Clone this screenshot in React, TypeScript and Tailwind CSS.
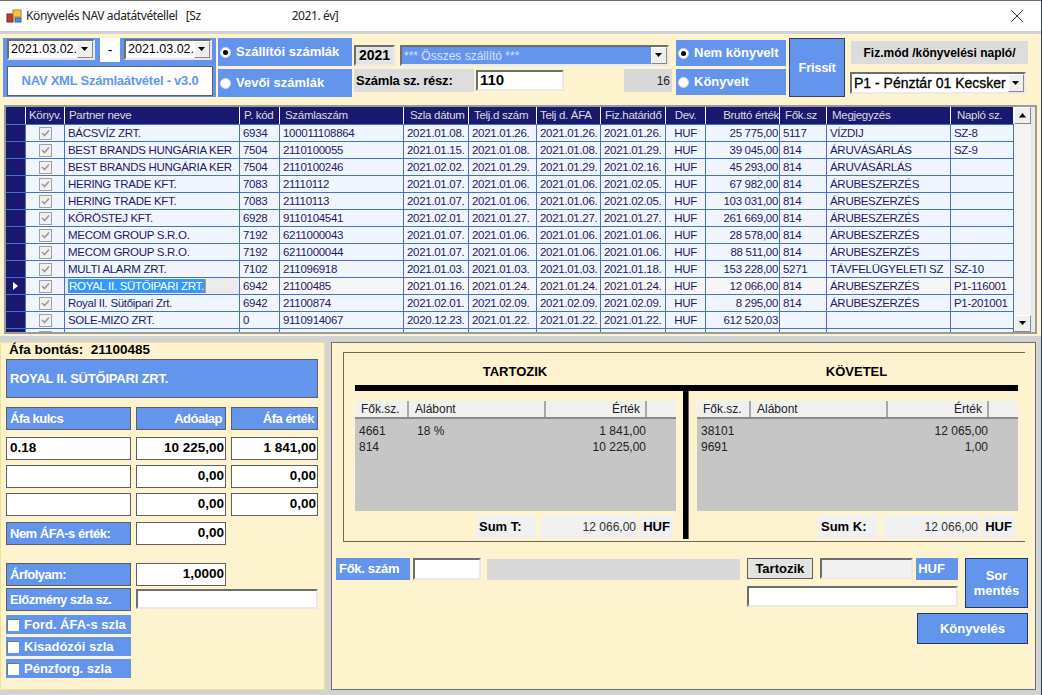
import { X } from 'lucide-react';
import { FC, ReactNode } from 'react';

const cols =
  'grid grid-cols-[19px_38px_174px_39px_123px_64px_67px_63px_64px_39px_73px_46px_123px_62px] gap-x-px';
const bevel =
  'border-2 border-t-[#6e6e6e] border-l-[#6e6e6e] border-r-[#e9e9e9] border-b-[#e9e9e9]';
const boxed = 'border border-[#5f5f5f]';
const blueLabel = 'bg-[#6495ed] text-white font-bold text-[13px] tracking-[-0.3px]';

const rows = [
  ['BÁCSVÍZ ZRT.', '6934', '100011108864', '2021.01.08.', '2021.01.26.', '2021.01.26.', '2021.01.26.', 'HUF', '25 775,00', '5117', 'VÍZDIJ', 'SZ-8'],
  ['BEST BRANDS HUNGÁRIA KER', '7504', '2110100055', '2021.01.15.', '2021.01.08.', '2021.01.08.', '2021.01.29.', 'HUF', '39 045,00', '814', 'ÁRUVÁSÁRLÁS', 'SZ-9'],
  ['BEST BRANDS HUNGÁRIA KER', '7504', '2110100246', '2021.02.02.', '2021.01.29.', '2021.01.29.', '2021.02.16.', 'HUF', '45 293,00', '814', 'ÁRUVÁSÁRLÁS', ''],
  ['HERING TRADE KFT.', '7083', '21110112', '2021.01.07.', '2021.01.06.', '2021.01.06.', '2021.02.05.', 'HUF', '67 982,00', '814', 'ÁRUBESZERZÉS', ''],
  ['HERING TRADE KFT.', '7083', '21110113', '2021.01.07.', '2021.01.06.', '2021.01.06.', '2021.02.05.', 'HUF', '103 031,00', '814', 'ÁRUBESZERZÉS', ''],
  ['KŐRÖSTEJ KFT.', '6928', '9110104541', '2021.02.01.', '2021.01.27.', '2021.01.27.', '2021.01.27.', 'HUF', '261 669,00', '814', 'ÁRUBESZERZÉS', ''],
  ['MECOM GROUP S.R.O.', '7192', '6211000043', '2021.01.07.', '2021.01.06.', '2021.01.06.', '2021.01.06.', 'HUF', '28 578,00', '814', 'ÁRUBESZERZÉS', ''],
  ['MECOM GROUP S.R.O.', '7192', '6211000044', '2021.01.07.', '2021.01.06.', '2021.01.06.', '2021.01.06.', 'HUF', '88 511,00', '814', 'ÁRUBESZERZÉS', ''],
  ['MULTI ALARM ZRT.', '7102', '211096918', '2021.01.03.', '2021.01.03.', '2021.01.03.', '2021.01.18.', 'HUF', '153 228,00', '5271', 'TÁVFELÜGYELETI SZ', 'SZ-10'],
  ['ROYAL II. SÜTŐIPARI ZRT.', '6942', '21100485', '2021.01.16.', '2021.01.24.', '2021.01.24.', '2021.01.24.', 'HUF', '12 066,00', '814', 'ÁRUBESZERZÉS', 'P1-116001'],
  ['Royal II. Sütőipari Zrt.', '6942', '21100874', '2021.02.01.', '2021.02.09.', '2021.02.09.', '2021.02.09.', 'HUF', '8 295,00', '814', 'ÁRUBESZERZÉS', 'P1-201001'],
  ['SOLE-MIZO ZRT.', '0', '9110914067', '2020.12.23.', '2021.01.22.', '2021.01.22.', '2021.01.22.', 'HUF', '612 520,03', '', '', ''],
  ['', '', '', '', '', '', '', '', '', '', '', ''],
];

const headers = [
  { text: 'Könyv.', cls: 'pl-[3px]' },
  { text: 'Partner neve', cls: 'pl-[4px]' },
  { text: 'P. kód', cls: 'pl-[4px]' },
  { text: 'Számlaszám', cls: 'pl-[5px]' },
  { text: 'Szla dátum', cls: 'pl-[6px]' },
  { text: 'Telj.d szám', cls: 'pl-[5px]' },
  { text: 'Telj d. ÁFA', cls: 'pl-[3px]' },
  { text: 'Fiz.határidő', cls: 'pl-[4px]' },
  { text: 'Dev.', cls: 'text-center' },
  { text: 'Bruttó érték', cls: 'text-right' },
  { text: 'Fők.sz', cls: 'pl-[5px]' },
  { text: 'Megjegyzés', cls: 'pl-[5px]' },
  { text: 'Napló sz.', cls: 'pl-[6px]' },
];

const DropButton: FC = () => (
  <div className="w-[16px] h-full bg-[#efefef] border border-t-white border-l-white border-r-[#8a8a8a] border-b-[#8a8a8a] flex items-center justify-center shrink-0">
    <svg width="8" height="5" viewBox="0 0 8 5">
      <path d="M0 0h7L3.5 4z" fill="#000" />
    </svg>
  </div>
);

const Radio: FC<{ checked?: boolean }> = ({ checked }) => (
  <span className="w-[11px] h-[11px] rounded-full bg-white border border-[#d8d8d8] flex items-center justify-center shrink-0">
    {checked && <span className="w-[5px] h-[5px] rounded-full bg-black" />}
  </span>
);

const GridCheck: FC = () => (
  <svg width="13" height="13" viewBox="0 0 13 13">
    <rect x="0.5" y="0.5" width="12" height="12" fill="#f1f1f1" stroke="#a0a0a0" />
    <path d="M3 6l2.5 2.5L10 3.5" fill="none" stroke="#9a9a9a" strokeWidth="1.6" />
  </svg>
);

const RadioBox: FC<{ label: string; checked?: boolean; className: string }> = ({ label, checked, className }) => (
  <div className={`${blueLabel} flex items-center gap-[5px] pl-[2px] tracking-normal ${className}`}>
    <Radio checked={checked} />
    <span>{label}</span>
  </div>
);

const DateBox: FC<{ className?: string }> = ({ className }) => (
  <div className={`${bevel} w-[88px] h-[21px] bg-white flex items-center text-[12.5px] leading-none pl-[2px] justify-between ${className}`}>
    <span>2021.03.02.</span>
    <DropButton />
  </div>
);

const TopBar: FC = () => (
  <div className="h-[71px] bg-[#fdf3cf] flex items-start pl-[3px] pt-[4px] shrink-0">
    <div className="w-[213px] h-[59px] bg-[#6495ed] pl-[4px] pt-px flex flex-col gap-[3px]">
      <div className="flex items-start h-[24px]">
        <DateBox />
        <div className="ml-[5px] w-[20px] h-[24px] -mt-px bg-white flex items-center justify-center text-[14px]">-</div>
        <DateBox className="ml-[4px]" />
      </div>
      <div className={`${boxed} w-[206px] h-[30px] bg-white flex items-center justify-center text-[#6495ed] font-bold text-[13px] tracking-[-0.25px]`}>
        NAV XML Számlaátvétel - v3.0
      </div>
    </div>
    <div className="w-[134px] ml-[2px] flex flex-col gap-[3px]">
      <RadioBox label="Szállítói számlák" checked className="h-[28px]" />
      <RadioBox label="Vevői számlák" className="h-[28px]" />
    </div>
    <div className="ml-[2px] w-[318px] flex flex-col">
      <div className="flex gap-[5px] mt-[7px] h-[21px]">
        <div className={`${bevel} w-[41px] bg-[#e3e3e3] flex items-center justify-center font-bold text-[14px]`}>2021</div>
        <div className={`${bevel} w-[269px] bg-[#6495ed] flex items-center justify-between text-[#d6e3fa] text-[12px] pl-[2px]`}>
          <span>*** Összes szállító ***</span>
          <DropButton />
        </div>
      </div>
      <div className="flex mt-[3px] h-[23px] items-start">
        <div className="w-[120px] h-[23px] bg-[#dcdcdc] flex items-center pl-[2px] font-bold text-[13px] tracking-[-0.2px]">Számla sz. rész:</div>
        <div className={`${bevel} w-[88px] h-[21px] mt-px ml-[2px] bg-white flex items-center pl-[2px] font-bold text-[15px]`}>110</div>
        <div className="w-[48px] h-[23px] ml-[60px] bg-[#d9d9d9] flex items-center justify-end pr-[2px] text-[12px] text-[#222]">16</div>
      </div>
    </div>
    <div className="ml-[4px] mt-[2px] w-[110px] flex flex-col gap-[3px]">
      <RadioBox label="Nem könyvelt" checked className="h-[26px]" />
      <RadioBox label="Könyvelt" className="h-[26px]" />
    </div>
    <div className={`${blueLabel} ml-[3px] w-[56px] h-[59px] border border-[#33415e] flex items-center justify-center`}>Frissít</div>
    <div className="ml-[5px] w-[178px] flex flex-col">
      <div className="ml-px mt-[3px] w-[177px] h-[23px] bg-[#dcdcdc] flex items-center justify-center font-bold text-[12px]">Fiz.mód /könyvelési napló/</div>
      <div className={`${bevel} mt-[8px] w-[176px] h-[22px] bg-white flex items-center justify-between pl-[2px] text-[14px] font-medium`}>
        <span className="overflow-hidden whitespace-nowrap [-webkit-text-stroke:0.3px_black]">P1 - Pénztár 01 Kecsker</span>
        <DropButton />
      </div>
    </div>
  </div>
);

const InvoiceGrid: FC = () => (
  <div className="bg-[#fdf3cf] px-[4px] pb-[2px] shrink-0">
    <div className="h-[229px] border-2 border-[#9a9a9a] flex overflow-hidden bg-[#e8e8e8]">
      <div className="w-[1008px] overflow-hidden text-[11.5px] tracking-[-0.3px]">
        <div className={`${cols} h-[17px] bg-white/80`}>
          <div className="bg-[#191970]" />
          {headers.map((h) => (
            <div key={h.text} className={`bg-[#191970] text-[#dcdcdc] whitespace-nowrap overflow-hidden leading-[16px] ${h.cls}`}>
              {h.text}
            </div>
          ))}
        </div>
        <div className="bg-[#4a6fc8] pt-px">
          {rows.map((r, i) => (
            <div key={i} className={`${cols} h-[17px] pb-px`}>
              <div className="bg-[#191970] flex items-center justify-center">
                {i === 9 && <span className="w-0 h-0 border-y-[4px] border-y-transparent border-l-[5px] border-l-white" />}
              </div>
              <div className="bg-[#eff6ff] flex items-center justify-center"><GridCheck /></div>
              {r.map((c, j) => (
                <div
                  key={j}
                  className={`${i === 9 ? (j === 0 ? 'bg-[#ececec] pl-[2px]' : 'bg-[#f7f7f7]') : 'bg-[#eff6ff]'} text-[#1a1a66] leading-[16px] whitespace-nowrap overflow-hidden ${
                    j === 8 ? 'text-right pr-px' : j === 7 ? 'text-center' : 'pl-[3px]'
                  }`}
                >
                  {i === 9 && j === 0 ? (
                    <span className="bg-[#3399ff] text-white border-r border-[#f09030] inline-block pl-px pr-px leading-[14px]">{c}</span>
                  ) : (
                    c
                  )}
                </div>
              ))}
            </div>
          ))}
        </div>
      </div>
      <div className="w-[17px] bg-[#f3f3f3] flex flex-col justify-between h-[225px]">
        <div className="h-[17px] bg-[#efefef] border border-t-white border-l-white border-r-[#8a8a8a] border-b-[#8a8a8a] flex items-center justify-center">
          <svg width="8" height="5" viewBox="0 0 8 5"><path d="M0 4.5h7L3.5 0z" fill="#000" /></svg>
        </div>
        <div className="h-[17px] bg-[#efefef] border border-t-white border-l-white border-r-[#8a8a8a] border-b-[#8a8a8a] flex items-center justify-center">
          <svg width="8" height="5" viewBox="0 0 8 5"><path d="M0 0h7L3.5 4z" fill="#000" /></svg>
        </div>
      </div>
    </div>
  </div>
);

const Field: FC<{ className: string; children?: ReactNode }> = ({ className, children }) => (
  <div className={`${boxed} h-[23px] bg-white flex items-center font-bold text-[13.5px] px-px ${className}`}>{children}</div>
);

const Label: FC<{ className: string; children?: ReactNode }> = ({ className, children }) => (
  <div className={`${boxed} ${blueLabel} tracking-[-0.5px] h-[23px] flex items-center px-[3px] whitespace-nowrap ${className}`}>{children}</div>
);

const CheckRow: FC<{ label: string }> = ({ label }) => (
  <div className={`${blueLabel} w-[125px] h-[19px] flex items-center tracking-normal pl-px`}>
    <span className="w-[12px] h-[12px] bg-white border-t border-l border-[#777] shrink-0" />
    <span className="ml-[5px]">{label}</span>
  </div>
);

const VatPanel: FC = () => (
  <div className="w-[325px] h-[348px] bg-[#fdf3cf] border border-[#f0e090] pl-[5px] flex flex-col shrink-0">
    <div className="font-bold text-[13.5px] h-[17px] leading-[15px] pl-[3px] -mt-px whitespace-nowrap">Áfa bontás:&nbsp; 21100485</div>
    <div className={`${boxed} w-[312px] h-[39px] bg-[#6495ed] text-white font-bold text-[13px] flex items-center px-[3px] tracking-[-0.2px]`}>
      ROYAL II. SÜTŐIPARI ZRT.
    </div>
    <div className="flex gap-[5px] mt-[9px]">
      <Label className="w-[125px]">Áfa kulcs</Label>
      <Label className="w-[90px] justify-end">Adóalap</Label>
      <Label className="w-[87px] justify-end">Áfa érték</Label>
    </div>
    <div className="flex flex-col gap-[5px] mt-[7px]">
      {[['0.18', '10 225,00', '1 841,00'], ['', '0,00', '0,00'], ['', '0,00', '0,00']].map((r, i) => (
        <div key={i} className="flex gap-[5px]">
          <Field className="w-[125px] pl-[3px]">{r[0]}</Field>
          <Field className="w-[90px] justify-end">{r[1]}</Field>
          <Field className="w-[87px] justify-end">{r[2]}</Field>
        </div>
      ))}
    </div>
    <div className="flex gap-[5px] mt-[6px]">
      <Label className="w-[125px]">Nem ÁFA-s érték:</Label>
      <Field className="w-[90px] justify-end">0,00</Field>
    </div>
    <div className="flex gap-[5px] mt-[18px]">
      <Label className="w-[125px]">Árfolyam:</Label>
      <Field className="w-[90px] justify-end">1,0000</Field>
    </div>
    <div className="flex gap-[5px] mt-[2px]">
      <Label className="w-[125px]">Előzmény szla sz.</Label>
      <div className={`${bevel} w-[182px] h-[20px] mt-px bg-white`} />
    </div>
    <div className="flex flex-col gap-[3px] mt-[4px]">
      <CheckRow label="Ford. ÁFA-s szla" />
      <CheckRow label="Kisadózói szla" />
      <CheckRow label="Pénzforg. szla" />
    </div>
  </div>
);

const Ledger: FC<{ rows: string[][] }> = ({ rows: data }) => (
  <div className="w-[321px] h-[110px] bg-[#c6c6c6] text-[12px] text-[#222]">
    <div className="h-[18px] bg-[#f0f0f0] border-b-2 border-[#8a8a8a] grid grid-cols-[54px_137px_101px_29px] leading-[16px]">
      <div className="border-r-2 border-[#a8a8a8] pl-[6px]">Fők.sz.</div>
      <div className="border-r-2 border-[#a8a8a8] pl-[6px]">Alábont</div>
      <div className="border-r-2 border-[#a8a8a8] pr-[5px] text-right">Érték</div>
      <div />
    </div>
    <div className="grid grid-cols-[54px_137px_96px] pl-[4px] pt-[4px] leading-[16px]">
      {data.map((r) => (
        <div key={r[0]} className="contents">
          <div>{r[0]}</div>
          <div className="pl-[4px]">{r[1]}</div>
          <div className="text-right">{r[2]}</div>
        </div>
      ))}
    </div>
  </div>
);

const Summary: FC<{ sum: string; className: string }> = ({ sum, className }) => (
  <div className={`flex h-[23px] ${className}`}>
    <div className="w-[60px] bg-[#f0f0f0] flex items-center pl-[3px] font-bold text-[13px]">{sum}</div>
    <div className="w-[97px] ml-[5px] bg-[#f0f0f0] flex items-center justify-end text-[#333] pr-[2px] text-[12px]">12 066,00</div>
    <div className="w-[33px] ml-[2px] bg-[#f0f0f0] flex items-center justify-center font-bold text-[13px]">HUF</div>
  </div>
);

const LedgerPanel: FC = () => (
  <div className="w-[705px] h-[348px] ml-[6px] bg-[#fdf3cf] border border-[#6e6e6e] flex flex-col shrink-0">
    <div className="ml-[11px] mt-[9px] w-[682px] h-[190px] border-y border-l border-[#6e6a58] pl-[11px]">
      <div className="w-[663px] flex h-[32px] pt-[6px] items-center font-bold text-[13px]">
        <div className="w-[320px] shrink-0 text-center">TARTOZIK</div>
        <div className="w-[323px] ml-[20px] shrink-0 text-center">KÖVETEL</div>
      </div>
      <div className="w-[663px] h-[6px] bg-black" />
      <div className="flex">
        <div className="w-[328px] pt-[10px] flex flex-col gap-[4px]">
          <Ledger rows={[['4661', '18 %', '1 841,00'], ['814', '', '10 225,00']]} />
          <Summary sum="Sum T:" className="ml-[121px]" />
        </div>
        <div className="w-[6px] h-[148px] bg-black border-r border-r-[#666]" />
        <div className="ml-[8px] w-[321px] pt-[10px] flex flex-col gap-[4px]">
          <Ledger rows={[['38101', '', '12 065,00'], ['9691', '', '1,00']]} />
          <Summary sum="Sum K:" className="ml-[121px]" />
        </div>
      </div>
    </div>
    <div className="flex mt-[16px] pl-[4px]">
      <div className={`${blueLabel} w-[74px] h-[22px] flex items-center pl-[3px] tracking-[-0.2px]`}>Fők. szám</div>
      <div className={`${bevel} ml-[3px] w-[68px] h-[22px] bg-white`} />
      <div className="ml-[6px] w-[253px] h-[21px] mt-px bg-[#d9d9d9]" />
      <div className="ml-[7px] w-[211px] flex flex-col">
        <div className="flex h-[22px]">
          <div className={`${boxed} w-[66px] h-[21px] bg-[#e3e3e3] flex items-center justify-center font-bold text-[13px]`}>Tartozik</div>
          <div className={`${bevel} ml-[7px] w-[94px] h-[21px] bg-[#f0f0f0]`} />
          <div className={`${blueLabel} ml-[3px] w-[42px] h-[22px] flex items-center pl-[2px] tracking-normal`}>HUF</div>
        </div>
        <div className={`${bevel} mt-[6px] h-[21px] bg-white`} />
      </div>
      <div className={`${blueLabel} ml-[7px] w-[63px] h-[50px] border border-[#1f3a68] flex items-center justify-center text-center leading-[15px] tracking-normal`}>
        Sor<br />mentés
      </div>
    </div>
    <div className={`${blueLabel} ml-[585px] mt-[5px] w-[111px] h-[31px] border border-[#1f3a68] flex items-center justify-center tracking-normal`}>
      Könyvelés
    </div>
  </div>
);

const App: FC = () => (
  <div className="w-[1042px] h-[695px] bg-[#d2d2d2] border-r border-[#34465e] overflow-hidden font-['Liberation_Sans',sans-serif] text-black flex flex-col">
    <div className="h-[31px] bg-white border-t border-[#6b6b6b] flex items-center pl-[6px] pr-[13px] font-['Noto_Sans',sans-serif] text-[12px] tracking-[-0.4px] text-[#222] shrink-0">
      <svg width="16" height="16" viewBox="0 0 16 16" className="shrink-0">
        <rect x="1" y="6" width="6" height="8" fill="#c0392b" stroke="#7b241c" />
        <rect x="7" y="2" width="8" height="7" fill="#f4c542" stroke="#b8860b" />
        <rect x="9" y="10" width="6" height="4" fill="#5b8bd6" stroke="#2f5da8" />
      </svg>
      <span className="ml-[4px] whitespace-pre">Könyvelés NAV adatátvétellel   [Sz</span>
      <span className="ml-[91px]">2021. év]</span>
      <X className="ml-auto text-[#222]" size={22} strokeWidth={1} />
    </div>
    <div className="h-[3px] shrink-0" />
    <TopBar />
    <InvoiceGrid />
    <div className="flex mt-[6px]">
      <VatPanel />
      <LedgerPanel />
    </div>
  </div>
);

export default App;
